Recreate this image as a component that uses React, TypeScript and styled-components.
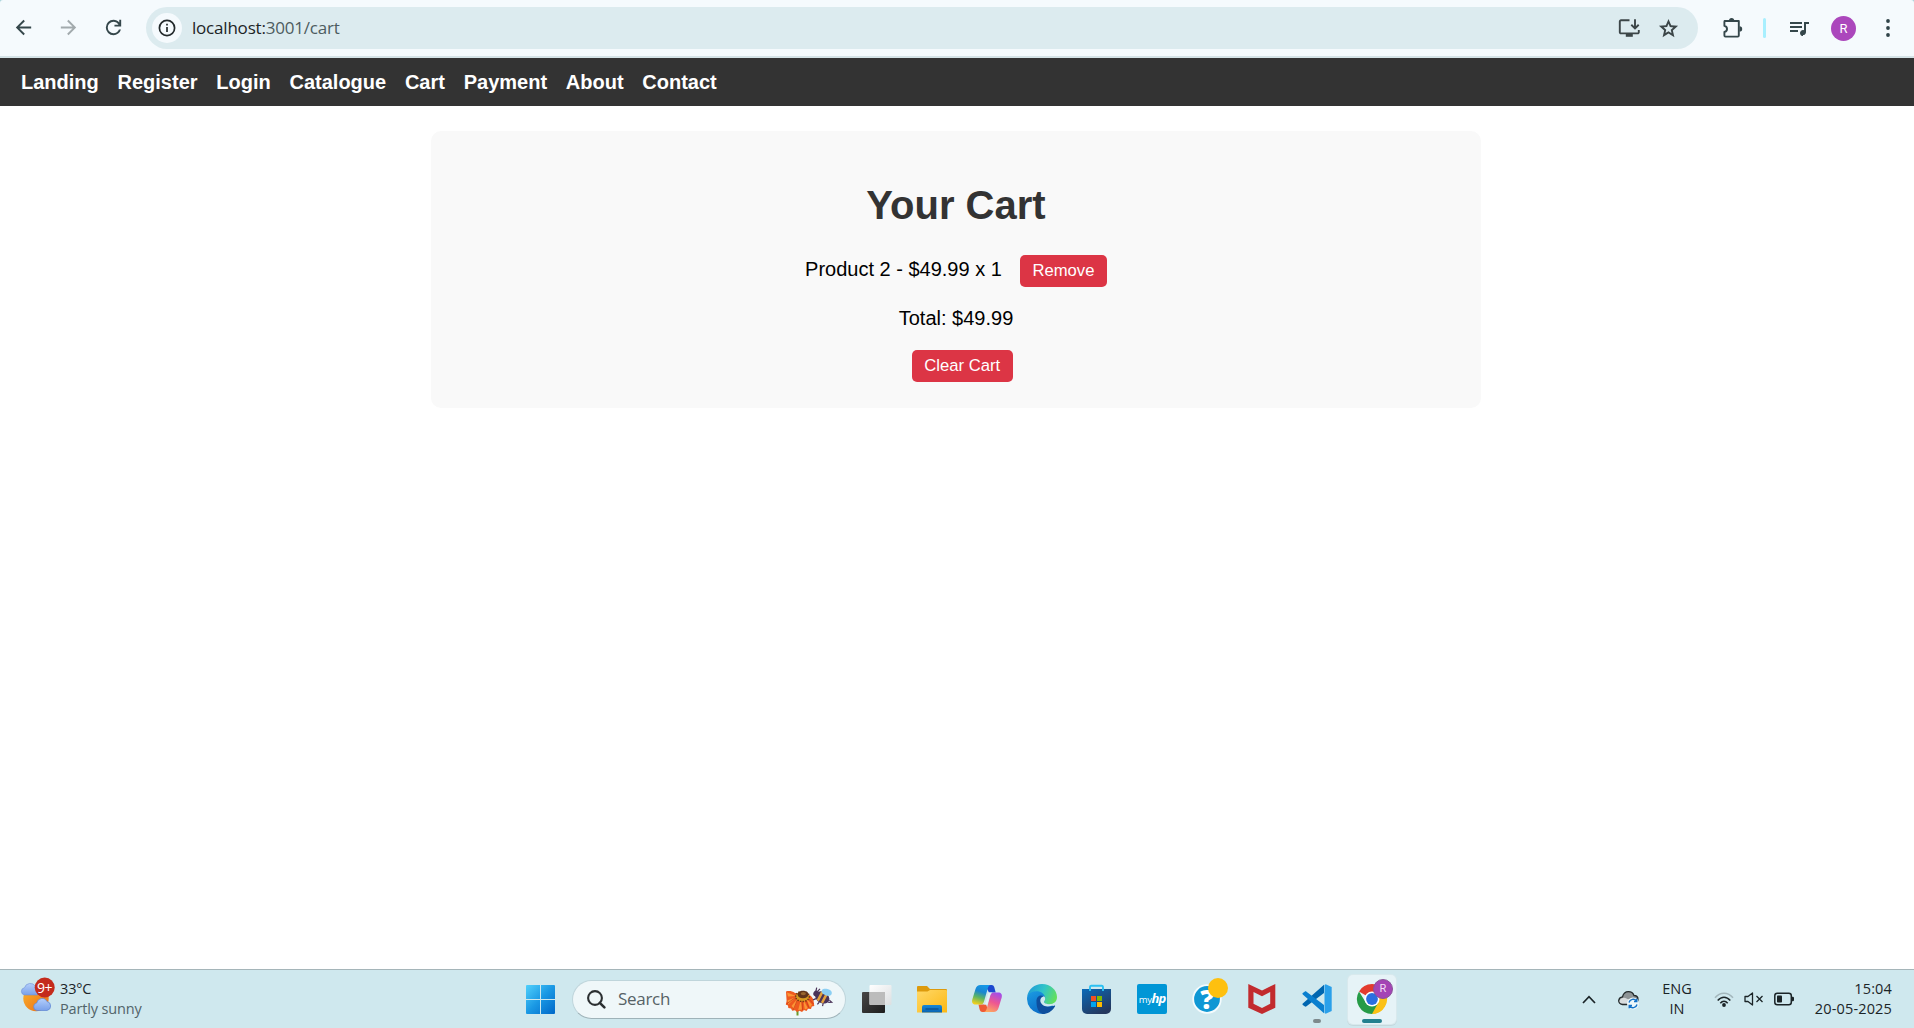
import React from "react";
import styled, { createGlobalStyle } from "styled-components";

const GlobalStyle = createGlobalStyle`
  *, *::before, *::after { box-sizing: border-box; }
  html, body { margin: 0; padding: 0; background: #fff; overflow: hidden; }
  svg { display: block; flex: none; overflow: visible; }
`;

const ui = `"Open Sans", "Noto Sans", sans-serif`;
const arial = `"Liberation Sans", Arial, sans-serif`;

const Screen = styled.div`
  display: flex;
  flex-direction: column;
  width: 1914px;
  height: 1028px;
  background: #fff;
`;

/* ---------- browser toolbar ---------- */

const ToolbarFrame = styled.div`
  background: #a9d3da;
  flex: none;
`;

const Toolbar = styled.div`
  display: flex;
  align-items: center;
  height: 58px;
  padding: 0 12px;
  background: #f5fafd;
  border-bottom: 2px solid #d5e3e7;
  border-radius: 3px 3px 0 0;
  color: #35474b;
`;

const NavButtons = styled.div`
  display: flex;
  align-items: center;
  gap: 22px;
  width: 134px;
  padding-bottom: 1px;
`;

const Omnibox = styled.div`
  display: flex;
  align-items: center;
  width: 1552px;
  height: 42px;
  padding: 0 18px 0 6px;
  border-radius: 21px;
  background: #dcebef;
  color: #3c4648;
`;

const SiteInfo = styled.div`
  display: flex;
  align-items: center;
  justify-content: center;
  width: 30px;
  height: 30px;
  border-radius: 50%;
  background: #f5fafd;
`;

const Url = styled.div`
  flex: 1;
  margin-left: 10px;
  font: 400 17px/24px ${ui};
  letter-spacing: -0.2px;
  color: #4d5c60;
  span { color: #1c2426; }
`;

const OmniActions = styled.div`
  display: flex;
  align-items: center;
  gap: 17px;
`;

const ToolbarActions = styled.div`
  display: flex;
  align-items: center;
  flex: 1;
  margin-left: 24px;
`;

const Divider = styled.div`
  width: 3px;
  height: 20px;
  margin: 0 21px 0 20px;
  border-radius: 2px;
  background: #a8effe;
`;

const Avatar = styled.div`
  display: flex;
  align-items: center;
  justify-content: center;
  width: 25px;
  height: 25px;
  margin: 0 30px 0 20px;
  border-radius: 50%;
  background: #ab47bc;
  color: #fff;
  font: 400 13px/25px Roboto, sans-serif;
`;

/* ---------- page ---------- */

const SiteNav = styled.nav`
  display: flex;
  align-items: center;
  gap: 18.75px;
  height: 48px;
  flex: none;
  padding: 0 21px;
  background: #333;
`;

const NavLink = styled.a`
  color: #fff;
  font: 700 20px/23px ${arial};
`;

const Page = styled.main`
  flex: 1;
  width: 1912px;
  padding-top: 25px;
`;

const CartPanel = styled.section`
  width: 1050px;
  height: 277px;
  margin: 0 auto;
  padding: 25px;
  border-radius: 10px;
  background: #f9f9f9;
  color: #000;
  font: 400 20px/23px ${arial};
  text-align: center;
`;

const Title = styled.h1`
  margin: 26px 0 27px;
  color: #333;
  font: 700 40px/46px ${arial};
`;

const Items = styled.ul`
  list-style: none;
  margin: 0;
  padding: 0;
`;

const Item = styled.li`
  height: 32px;
`;

const Total = styled.p`
  margin: 20px 0 20px;
`;

const DangerButton = styled.button`
  margin: 0 0 0 12.5px;
  padding: 6px 12.5px 7px;
  border: 0;
  border-radius: 5px;
  background: #dc3545;
  color: #fff;
  font: 400 16.667px/19px ${arial};
`;

/* ---------- taskbar ---------- */

const Taskbar = styled.footer`
  display: flex;
  align-items: center;
  flex: none;
  height: 59px;
  padding-right: 22px;
  border-top: 1px solid #a5b5b9;
  background: #cfe8ee;
  font: 400 14.5px/20px ${ui};
  color: #1b2427;
`;

const Weather = styled.div`
  display: flex;
  align-items: center;
  width: 526px;
  padding-left: 20px;
  & > svg { margin-bottom: 8px; }
`;

const Lines = styled.div<{ $align?: string; $spacing?: string }>`
  display: flex;
  flex-direction: column;
  align-items: ${(p) => p.$align || "flex-start"};
  letter-spacing: ${(p) => p.$spacing || "0"};
  white-space: nowrap;
`;

const Muted = styled.span`
  color: #52646a;
`;

const WeatherText = styled.div`
  margin-left: 4px;
`;

const SearchBox = styled.div`
  display: flex;
  align-items: center;
  width: 274px;
  height: 39px;
  margin: 0 16px 0 17px;
  padding: 0 13px 0 14px;
  border: 1px solid #bfd5db;
  border-bottom-color: #9fb3b9;
  border-radius: 20px;
  background: #eff7f9;
`;

const SearchText = styled.span`
  flex: 1;
  margin-left: 12px;
  font-size: 17px;
  letter-spacing: -0.3px;
  color: #566266;
`;

const Apps = styled.div`
  display: flex;
  align-items: center;
  gap: 25px;
`;

const AppSlot = styled.div<{ $active?: boolean }>`
  position: relative;
  display: flex;
  align-items: center;
  justify-content: center;
  width: 30px;
  height: 30px;
  ${(p) =>
    p.$active &&
    `
    width: 48px;
    height: 49px;
    margin-left: -9px;
    border-radius: 5px;
    background: #e6f3f7;
    box-shadow: 0 0 0 1px #d8e9ed, 0 1px 0 1px #c4d8dd;
  `}
`;

const Indicator = styled.i<{ $wide?: boolean }>`
  position: absolute;
  bottom: ${(p) => (p.$wide ? "1px" : "-9px")};
  left: 50%;
  width: ${(p) => (p.$wide ? 20 : 8)}px;
  height: 4px;
  border-radius: 2px;
  background: ${(p) => (p.$wide ? "#23808f" : "#7d898c")};
  transform: translateX(-50%);
`;

const AppBadge = styled.span`
  position: absolute;
  top: 4px;
  right: 3px;
  width: 20px;
  height: 20px;
  border-radius: 50%;
  background: #a444b5;
  border: 1px solid #8a5398;
  color: #f3dcf6;
  font: 400 11px/18px Roboto, sans-serif;
  text-align: center;
`;

const HpTile = styled.div`
  width: 30px;
  height: 30px;
  border-radius: 2px;
  background: #0096d6;
  color: #fff;
  font: 400 9.5px/30px ${ui};
  letter-spacing: -0.4px;
  text-align: center;
  white-space: nowrap;
  b { font: italic 700 13px/28px ${ui}; letter-spacing: -1px; }
`;

const Tray = styled.div`
  display: flex;
  align-items: center;
  margin-left: auto;
`;

const TrayLang = styled.div`
  width: 30px;
  margin: 0 22px 0 23px;
`;

const StatusIcons = styled.div<{ $after: number }>`
  display: flex;
  align-items: center;
  gap: 10px;
  margin-right: ${(p) => p.$after}px;
`;

const Clock = styled.div`
  width: 79px;
`;

/* ---------- icons ---------- */

const Symbol = ({ d, size = 23, color = "currentColor" }: { d: string; size?: number; color?: string }) => (
  <svg width={size} height={size} viewBox="0 -960 960 960" fill={color}>
    <path d={d} />
  </svg>
);

const paths = {
  back: "m313-440 224 224-57 56-320-320 320-320 57 56-224 224h487v80H313Z",
  forward: "M647-440H160v-80h487L423-744l57-56 320 320-320 320-57-56 224-224Z",
  reload:
    "M480-160q-134 0-227-93t-93-227q0-134 93-227t227-93q69 0 132 28.5T720-690v-110h80v280H520v-80h168q-32-56-87.5-88T480-720q-100 0-170 70t-70 170q0 100 70 170t170 70q77 0 139-44t87-116h84q-28 106-114 173t-196 67Z",
  star: "m354-287 126-76 126 77-33-144 111-96-146-13-58-136-58 135-146 13 111 97-33 143ZM233-120l65-281L80-590l288-25 112-265 112 265 288 25-218 189 65 281-247-149-247 149Z",
  queue:
    "M640-160q-50 0-85-35t-35-85q0-50 35-85t85-35q11 0 21 1.5t19 6.5v-328h200v80H760v320q0 50-35 85t-85 35ZM120-320v-80h320v80H120Zm0-160v-80h480v80H120Zm0-160v-80h480v80H120Z",
};

const InfoIcon = () => (
  <svg width="18" height="18" viewBox="0 0 18 18" fill="none" stroke="#22292b" strokeWidth="1.7">
    <circle cx="9" cy="9" r="7.6" />
    <path d="M9 8v5M9 4.8v1.8" />
  </svg>
);

const InstallIcon = () => (
  <svg width="22" height="20" viewBox="0 0 22 20" fill="none" stroke="currentColor" strokeWidth="1.9">
    <path d="M11.5 2.2H3A1.2 1.2 0 0 0 1.8 3.4v10.8a1.2 1.2 0 0 0 1.2 1.2h16.6a1.2 1.2 0 0 0 1.2-1.2V12" />
    <path d="M17 1.2v9M13.3 6.8 17 10.4l3.7-3.6" />
    <path d="M7.8 17.4h7" strokeWidth="2.8" />
  </svg>
);

const ExtensionIcon = () => (
  <svg width="21" height="21" viewBox="0 0 21 21">
    <path
      d="M2.6 3h14.2v14.6a1 1 0 0 1-1 1H3.4a1 1 0 0 1-1-1v-3.7c3.5-.8 3.5-5.2 0-6V3.9a.9.9 0 0 1 .9-.9Z"
      fill="none"
      stroke="currentColor"
      strokeWidth="1.9"
      strokeLinejoin="round"
    />
    <path d="M7 2.6a2.6 2.6 0 0 1 5.2 0ZM17.5 8.2a2.7 2.7 0 0 1 0 5.4Z" fill="currentColor" />
  </svg>
);

const MoreIcon = () => (
  <svg width="4" height="18" viewBox="0 0 4 18" fill="#2f4348">
    <circle cx="2" cy="2" r="1.9" />
    <circle cx="2" cy="9" r="1.9" />
    <circle cx="2" cy="16" r="1.9" />
  </svg>
);

const WeatherIcon = () => (
  <svg width="36" height="36" viewBox="0 0 36 36">
    <defs>
      <linearGradient id="sun" x1="0" y1="0" x2="1" y2="1">
        <stop offset="0" stopColor="#fbb52c" />
        <stop offset="1" stopColor="#ea6a16" />
      </linearGradient>
      <linearGradient id="cloud" x1="0" y1="0" x2="0" y2="1">
        <stop offset="0" stopColor="#b4cffb" />
        <stop offset="1" stopColor="#79a0ea" />
      </linearGradient>
    </defs>
    <circle cx="16" cy="21.500" r="12.700" fill="url(#sun)" />
    <path d="M4.500 18a3.700 3.700 0 0 1 0-7.300A6 6 0 0 1 15.500 9.500 4.300 4.300 0 0 1 17 18Z" fill="url(#cloud)" stroke="#6e90d8" strokeWidth=".6" />
    <path d="M17 33.500a3.800 3.800 0 0 1-.3-7.500 5.500 5.500 0 0 1 10.300-1.500A4.600 4.600 0 0 1 27 33.500Z" fill="url(#cloud)" stroke="#5f85d2" strokeWidth=".7" />
    <circle cx="24.700" cy="10.500" r="10" fill="#c42b1c" />
    <text x="24.500" y="15.500" textAnchor="middle" fontFamily="Open Sans, sans-serif" fontSize="14" fill="#fff" letterSpacing="-0.500">9+</text>
  </svg>
);

const WindowsIcon = () => (
  <svg width="29" height="29" viewBox="0 0 29 29">
    <defs>
      <linearGradient id="win" x1="0" y1="0" x2="29" y2="29" gradientUnits="userSpaceOnUse">
        <stop offset="0" stopColor="#50d0fb" />
        <stop offset=".5" stopColor="#1a98e4" />
        <stop offset="1" stopColor="#0067c8" />
      </linearGradient>
    </defs>
    <path
      fill="url(#win)"
      d="M1 0h13v14H0V1a1 1 0 0 1 1-1ZM15 0h13a1 1 0 0 1 1 1v13H15ZM0 15h14v14H1a1 1 0 0 1-1-1ZM15 15h14v13a1 1 0 0 1-1 1H15Z"
    />
  </svg>
);

const SearchIcon = () => (
  <svg width="19" height="19" viewBox="0 0 19 19" fill="none" stroke="#2b2f31" strokeWidth="2.1">
    <circle cx="8" cy="8" r="6.900" />
    <path d="m12.800 12.800 4.600 4.600" strokeWidth="2.600" strokeLinecap="round" />
  </svg>
);

const FlowerIcon = () => (
  <svg width="48" height="32" viewBox="0 0 48 32">
    <path d="M13.500 26v6.500" stroke="#6b9a2c" strokeWidth="2" />
    <path
      d="M2 8.500c3-1 6-.5 9 1.500l12 1c3 1 6 3 6.500 6.500l.8 5.500-2.500.500-.8 2.500-3-.2-1.500 2.200-2.500-1-2 2-2.500-1.200-2.500 1.200-2-1.700-2.800.4L7 25.500 4.300 25 4 22.500 1.800 21.500 2.600 18Z"
      fill="#ee5a1f"
    />
    <path d="M12 13 3 9.500l1 4ZM12 14l-8.500 3.500.8 4ZM14 15l-6.500 8 2.800 3ZM17 16l-2.800 11 3.800-.5ZM19 16l1.800 10.500 3-1.200ZM22 15l4 9.500 2-3Z" fill="#fb9636" />
    <path d="m12 14-9.500 7M14 15l-4.500 11.500M18 16l.5 11M21 15l4 10M23 14l6.500 7" stroke="#c93415" strokeWidth=".7" fill="none" />
    <ellipse cx="18.500" cy="13.500" rx="6.800" ry="5" fill="#d89a1e" strokeDasharray="1.300 1.300" stroke="#6c3516" strokeWidth="1.500" />
    <ellipse cx="19" cy="11.500" rx="5.400" ry="3.800" fill="#61341a" />
    <ellipse cx="19.300" cy="10.600" rx="2.600" ry="1.600" fill="#99652c" />
    <g transform="rotate(28 38.500 14)">
      <circle cx="31.500" cy="14" r="3" fill="#4a3358" />
      <ellipse cx="38.500" cy="14.500" rx="7.500" ry="5.600" fill="#4a3358" />
      <path d="M36 9.600v9.800M40.800 9.600v9.800" stroke="#e2a13c" strokeWidth="2.500" />
      <path d="m46 13.500 3 .7-3 1.800M33.500 18.500l-2 2.500M38 20l-.5 3M42 19l.8 3M30 12l-1-3.500M31.500 11l1-3" stroke="#4a3358" strokeWidth="1.200" fill="none" />
    </g>
    <path d="M38 10C36.500 6 40 5 43.500 6c4 .7 5.500 4 3.500 6-2.500 1.800-6 .5-9-2Z" fill="#8ccff3" />
  </svg>
);

const TaskViewIcon = () => (
  <svg width="30" height="30" viewBox="0 0 30 30">
    <defs>
      <linearGradient id="tv" x1="0" y1="0" x2="1" y2="1">
        <stop offset="0" stopColor="#474747" />
        <stop offset="1" stopColor="#1d1d1d" />
      </linearGradient>
      <linearGradient id="tvf" x1="0" y1="0" x2="1" y2="1">
        <stop offset="0" stopColor="#fff" />
        <stop offset="1" stopColor="#dcdfe1" />
      </linearGradient>
    </defs>
    <rect x="0" y="8" width="23" height="21" rx="1" fill="url(#tv)" />
    <rect x="7.500" y="1" width="22" height="20" rx="1" fill="url(#tvf)" />
    <path d="M7.500 8H23v13H8.500a1 1 0 0 1-1-1Z" fill="#bcbcbc" />
  </svg>
);

const ExplorerIcon = () => (
  <svg width="30" height="30" viewBox="0 0 30 30">
    <defs>
      <linearGradient id="fold" x1="0" y1="0" x2="1" y2="1">
        <stop offset="0" stopColor="#ffd868" />
        <stop offset="1" stopColor="#fcb813" />
      </linearGradient>
      <linearGradient id="tab" x1="0" y1="0" x2="0" y2="1">
        <stop offset="0" stopColor="#1687d8" />
        <stop offset="1" stopColor="#0a63b0" />
      </linearGradient>
    </defs>
    <path d="M0 3a1 1 0 0 1 1-1h9l3 3h16a1 1 0 0 1 1 1v5H0Z" fill="#dd9a0c" />
    <path d="M0 7.500h10.500L13 6h16a1 1 0 0 1 1 1v21.500H0Z" fill="url(#fold)" />
    <path d="M5 28.500V23a2 2 0 0 1 2-2h16a2 2 0 0 1 2 2v5.500Z" fill="url(#tab)" />
    <path d="M8.500 25h13" stroke="#074b8c" strokeWidth="1.200" />
  </svg>
);

const CopilotIcon = () => (
  <svg width="30" height="30" viewBox="0 0 30 30">
    <defs>
      <linearGradient id="cpL" x1=".6" y1="0" x2=".3" y2="1">
        <stop offset="0" stopColor="#1598e8" />
        <stop offset=".35" stopColor="#1a86d0" />
        <stop offset=".65" stopColor="#5cb562" />
        <stop offset="1" stopColor="#f2cf1c" />
      </linearGradient>
      <linearGradient id="cpR" x1=".7" y1="0" x2=".3" y2="1">
        <stop offset="0" stopColor="#a44de8" />
        <stop offset=".5" stopColor="#ee5791" />
        <stop offset="1" stopColor="#fda860" />
      </linearGradient>
    </defs>
    <path d="M13 1h6.500c1.800 0 2.500 1.200 3 3l1.200 4.500H17Z" fill="#1c48cf" />
    <path d="M17 28h-6.500c-1.800 0-2.500-1.200-3-3L6.500 20.500H14Z" fill="#ef5a35" />
    <path d="M8.500 1H19c-2 0-2.600 1.300-3.200 3.200L12 17.500c-.6 2-1.400 3-3.500 3H4c-3.200 0-4.500-2-3.700-5L3.500 5C4.300 2.300 6 1 8.500 1Z" fill="url(#cpL)" />
    <path d="M21.500 28H11.500c2 0 2.600-1.300 3.200-3.200L18.300 11.500c.6-2 1.400-3 3.500-3H26c3.200 0 4.500 2 3.700 5L26.500 24c-.8 2.700-2.500 4-5 4Z" fill="url(#cpR)" />
    <path d="M16.500 8.500h4c-1.500.6-2 1.500-2.500 3l-2.700 9c-.3 0-1.300 0-3.300 0 1.200-.6 1.600-1.800 2-3Z" fill="#e4f1f6" />
  </svg>
);

const EdgeIcon = () => (
  <svg width="30" height="30" viewBox="0 0 30 30">
    <defs>
      <linearGradient id="edT" x1="0" y1=".3" x2="1" y2=".6">
        <stop offset="0" stopColor="#209bd8" />
        <stop offset=".5" stopColor="#31c4c8" />
        <stop offset="1" stopColor="#64e05a" />
      </linearGradient>
      <linearGradient id="edB" x1="0" y1="0" x2=".6" y2="1">
        <stop offset="0" stopColor="#1c9ee4" />
        <stop offset="1" stopColor="#0a68c4" />
      </linearGradient>
    </defs>
    <path d="M0 15C0 9 4 6 9.500 6 16 6 20 10 20 14l-2 5 9.800 3.500A15 15 0 0 1 0 15Z" fill="url(#edB)" />
    <path d="M9.500 18C9 12 14 10 17 13c-2 1-2.600 3.500-1.500 6 2 4.500 8 4.500 12 2.500.6-.2.800.4.400 1C25 27.500 20.500 30 15.500 30 11 28 9.500 23 9.500 18Z" fill="#0e4f9e" />
    <path d="M.3 12C1.500 5 7.500 0 15 0c8.500 0 15 6 15 13 0 4.500-3 7.200-7.500 7.200-3.500 0-5.500-1-5.500-2.200 0-.8 1.200-1.500 1.200-3.500C18.200 10 14 7.300 9.500 7.300 5.500 7.300 2 9 .3 12Z" fill="url(#edT)" />
    <path d="M17 12.200c-3.600.8-4.400 4.300-3 6.800 1.800 3.400 6.500 4 10 3 1.500-.5 2.500-1.200 3.500-2.500-2 .8-3.500.9-5 .7-3.500 0-5.500-1-5.500-2.200 0-.8 1.200-1.500 1.200-3.500 0-.9-.5-1.700-1.200-2.300Z" fill="#cfe8ee" />
  </svg>
);

const StoreIcon = () => (
  <svg width="30" height="30" viewBox="0 0 30 30">
    <defs>
      <linearGradient id="st" x1="0" y1="0" x2=".6" y2="1">
        <stop offset="0" stopColor="#0b6ab8" />
        <stop offset="1" stopColor="#24385e" />
      </linearGradient>
    </defs>
    <path d="M8 7V2.800A1.300 1.300 0 0 1 9.300 1.700h10.400A1.300 1.300 0 0 1 21 2.800V7" fill="none" stroke="#2bc0f2" strokeWidth="1.900" />
    <path d="M0 5h29v20a5 5 0 0 1-5 5H5a5 5 0 0 1-5-5Z" fill="url(#st)" />
    <path d="M8 5v2M21 5v2" stroke="#2bc0f2" strokeWidth="1.900" />
    <path d="M9 12h5v5H9Z" fill="#f25022" />
    <path d="M15 12h5v5h-5Z" fill="#7fba00" />
    <path d="M9 18h5v5H9Z" fill="#00a4ef" />
    <path d="M15 18h5v5h-5Z" fill="#ffb900" />
  </svg>
);

const HelpIcon = () => (
  <svg width="30" height="30" viewBox="0 0 30 30">
    <circle cx="15" cy="15" r="13.800" fill="#0f97d4" stroke="#f4fbfd" strokeWidth="1.800" />
    <text x="15" y="25" textAnchor="middle" fontFamily="Open Sans, sans-serif" fontWeight="800" fontSize="27" fill="#fff">?</text>
    <circle cx="26" cy="4" r="10" fill="#fec00f" />
  </svg>
);

const McAfeeIcon = () => (
  <svg width="30" height="30" viewBox="0 0 30 30">
    <path d="M1.300 0 15 6.500 28.300 0v23.700L15 30 1.300 23.700ZM6.500 8v11.700L15 24l8.200-4.300V8L15 12.300Z" fill="#c22b2e" fillRule="evenodd" />
  </svg>
);

const VsCodeIcon = () => (
  <svg width="30" height="30" viewBox="0 0 30 30">
    <path d="M.8 19.500 22 .8V9L4.500 22.300c-.6.500-1.400.4-1.900 0L.8 20.900c-.5-.4-.5-1 0-1.400Z" fill="#0066b0" />
    <path d="M.8 10.500 22 29.200V21L4.500 7.700c-.6-.5-1.400-.4-1.900 0L.8 9.100c-.5.400-.5 1 0 1.400Z" fill="#0a7fcf" />
    <path d="M22.500 1v28l1.200.8 6-2.900V3.100l-6-2.900Z" fill="#2aa0ea" />
  </svg>
);

const ChromeIcon = () => (
  <svg width="30" height="30" viewBox="0 0 30 30">
    <path d="M15 15 2 7.500A15 15 0 0 1 28 7.500Z" fill="#e33b2e" />
    <path d="M15 15 28 7.500A15 15 0 0 1 15 30Z" fill="#fbc116" />
    <path d="M15 8h12.800a15 15 0 0 1-13 22l6.500-11Z" fill="#fbc116" />
    <path d="M2 7.500A15 15 0 0 0 15 30l6.200-11.200L15 15 8.800 18.500Z" fill="#269b47" />
    <circle cx="15" cy="15" r="7.500" fill="#fff" />
    <circle cx="15" cy="15" r="5.900" fill="#2a6fe0" />
  </svg>
);

const CaretIcon = () => (
  <svg width="14" height="9" viewBox="0 0 14 9" fill="none" stroke="#1b2427" strokeWidth="1.700">
    <path d="m1 8 6-6.300L13 8" />
  </svg>
);

const CloudIcon = () => (
  <svg width="21" height="19" viewBox="0 0 21 19">
    <path d="M4.500 14.500C1.500 14 .5 12 .8 10.200 1 8.300 2.500 7 4.500 6.800 5.300 3.500 7.800 1.700 10.500 1.700s4.600 1.500 5.500 3.800c2.500 0 4 1.700 4 4 0 3-2 5-5 5Z" fill="#8e9496" stroke="#22292b" strokeWidth="1.300" />
    <path d="M1.500 11c1-3 4.500-4 7-2.500L18 13.500H5C3 13.500 1.500 12.800 1.500 11Z" fill="#d8dcdd" />
    <circle cx="15" cy="13.500" r="6" fill="#eef7fa" />
    <path d="M11 12.500a4.200 4.200 0 0 1 7.500-1.500M19 14.500a4.200 4.200 0 0 1-7.500 1.500M18.800 8.700v2.800H16M11.200 18.300v-2.800H14" fill="none" stroke="#1673c8" strokeWidth="1.400" />
  </svg>
);

const WifiIcon = () => (
  <svg width="20" height="15" viewBox="0 0 20 15" fill="none" stroke="#1b2427" strokeWidth="1.500">
    <path d="M1 5.700C6-.4 14-.4 19 5.700" stroke="#a3b7bc" />
    <path d="M3.700 8.500c3.800-4.500 8.800-4.500 12.600 0M6.300 11.200c2.200-2.600 5.200-2.600 7.400 0" />
    <circle cx="10" cy="13" r="1.900" fill="#1b2427" stroke="none" />
  </svg>
);

const MuteIcon = () => (
  <svg width="20" height="14" viewBox="0 0 20 14" fill="none" stroke="#1b2427" strokeWidth="1.300">
    <path d="M1 4.500h3L8.500 1v12L4 9.500H1Z" strokeLinejoin="round" />
    <path d="m12.500 4 6 6M18.500 4l-6 6" />
  </svg>
);

const BatteryIcon = () => (
  <svg width="20" height="14" viewBox="0 0 20 14">
    <rect x=".8" y="1.300" width="16.500" height="11.400" rx="2.500" fill="none" stroke="#1b2427" strokeWidth="1.500" />
    <rect x="3" y="3.500" width="5" height="7" rx=".8" fill="#1b2427" />
    <path d="M18 4.700h.8A1.200 1.200 0 0 1 20 5.900v2.200a1.200 1.200 0 0 1-1.200 1.200H18Z" fill="#1b2427" />
  </svg>
);

const links = ["Landing", "Register", "Login", "Catalogue", "Cart", "Payment", "About", "Contact"];

const apps = [
  <TaskViewIcon />,
  <ExplorerIcon />,
  <CopilotIcon />,
  <EdgeIcon />,
  <StoreIcon />,
  <HpTile>my<b>hp</b></HpTile>,
  <HelpIcon />,
  <McAfeeIcon />,
];

export default function App() {
  return (
    <Screen>
      <GlobalStyle />
      <ToolbarFrame>
        <Toolbar>
          <NavButtons>
            <Symbol d={paths.back} />
            <Symbol d={paths.forward} color="#a2aaad" />
            <Symbol d={paths.reload} />
          </NavButtons>
          <Omnibox>
            <SiteInfo><InfoIcon /></SiteInfo>
            <Url><span>localhost:</span>3001/cart</Url>
            <OmniActions>
              <InstallIcon />
              <Symbol d={paths.star} />
            </OmniActions>
          </Omnibox>
          <ToolbarActions>
            <ExtensionIcon />
            <Divider />
            <Symbol d={paths.queue} size={24} />
            <Avatar>R</Avatar>
            <MoreIcon />
          </ToolbarActions>
        </Toolbar>
      </ToolbarFrame>

      <SiteNav>
        {links.map((label) => (
          <NavLink key={label}>{label}</NavLink>
        ))}
      </SiteNav>

      <Page>
        <CartPanel>
          <Title>Your Cart</Title>
          <Items>
            <Item>
              Product 2 - $49.99 x 1 <DangerButton>Remove</DangerButton>
            </Item>
          </Items>
          <Total>Total: $49.99</Total>
          <DangerButton>Clear Cart</DangerButton>
        </CartPanel>
      </Page>

      <Taskbar>
        <Weather>
          <WeatherIcon />
          <WeatherText>
            <Lines $spacing="-0.15px">
              <span>33°C</span>
              <Muted>Partly sunny</Muted>
            </Lines>
          </WeatherText>
        </Weather>
        <WindowsIcon />
        <SearchBox>
          <SearchIcon />
          <SearchText>Search</SearchText>
          <FlowerIcon />
        </SearchBox>
        <Apps>
          {apps.map((icon, i) => (
            <AppSlot key={i}>{icon}</AppSlot>
          ))}
          <AppSlot>
            <VsCodeIcon />
            <Indicator />
          </AppSlot>
          <AppSlot $active>
            <ChromeIcon />
            <AppBadge>R</AppBadge>
            <Indicator $wide />
          </AppSlot>
        </Apps>
        <Tray>
          <StatusIcons $after={22}>
            <CaretIcon />
          </StatusIcons>
          <CloudIcon />
          <TrayLang>
            <Lines $align="center">
              <span>ENG</span>
              <span>IN</span>
            </Lines>
          </TrayLang>
          <StatusIcons $after={19}>
            <WifiIcon />
            <MuteIcon />
            <BatteryIcon />
          </StatusIcons>
          <Clock>
            <Lines $align="flex-end" $spacing="0.15px">
              <span>15:04</span>
              <span>20-05-2025</span>
            </Lines>
          </Clock>
        </Tray>
      </Taskbar>
    </Screen>
  );
}
